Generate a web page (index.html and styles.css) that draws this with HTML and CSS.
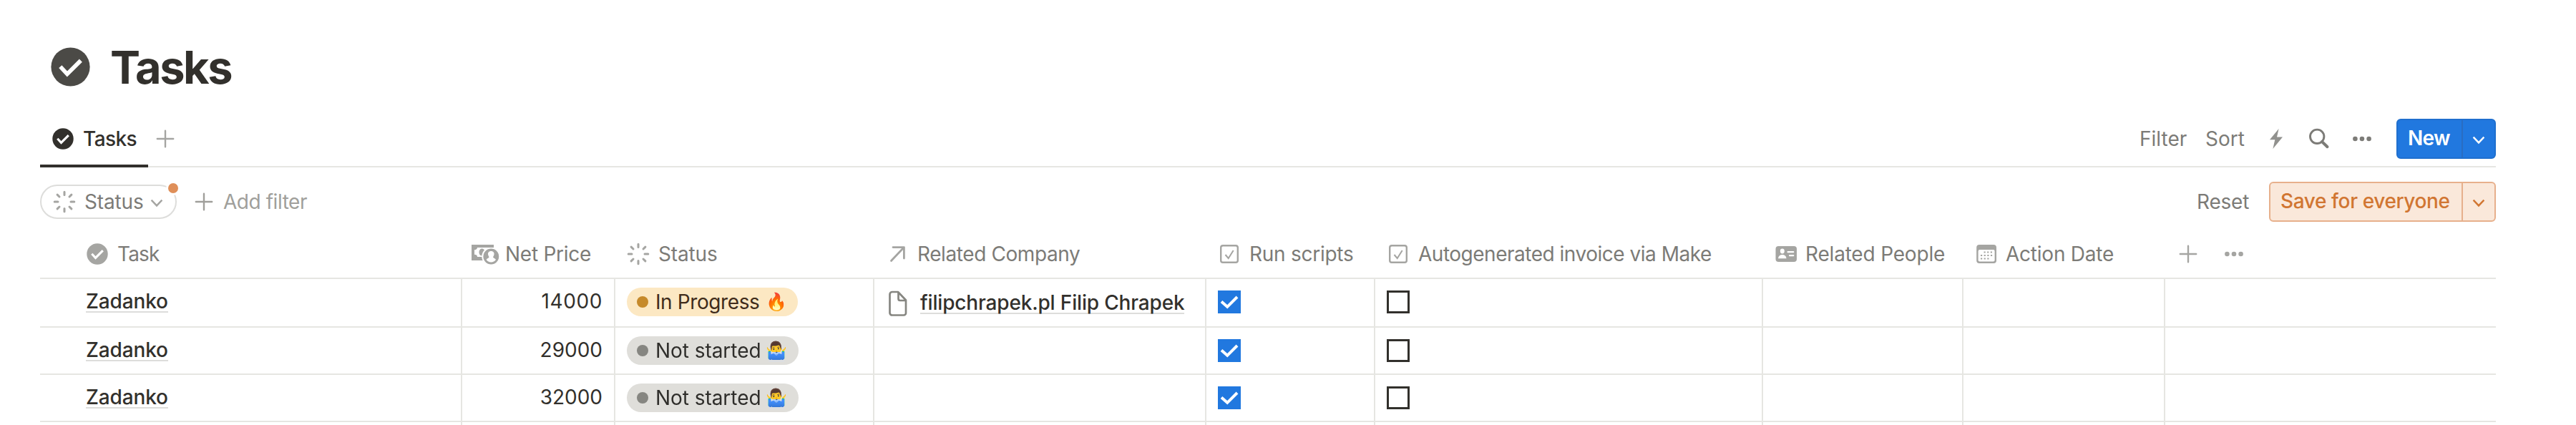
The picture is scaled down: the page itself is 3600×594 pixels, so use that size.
FILE: index.html
```html
<!DOCTYPE html>
<html lang="en">
<head>
<meta charset="utf-8">
<title>Tasks</title>
<link rel="stylesheet" href="styles.css">
</head>
<body>
<svg class="defs" width="0" height="0" aria-hidden="true">
  <symbol id="check-circle" viewBox="0 0 32 32"><circle cx="16" cy="16" r="14.7" fill="currentColor"/><path d="M8.3 15.8l5.2 5.6 10.300-10.200" fill="none" stroke="#fff" stroke-width="3.1"/></symbol>
  <symbol id="spinner" viewBox="0 0 32 32"><g stroke="currentColor" stroke-width="3" stroke-linecap="round"><path d="M16 2.2v4.2M16 25.6v4.2M2.2 16h4.8M25 16h4.8M6.1 6.1l2.9 2.9M23 23l2.9 2.9M6.1 25.9L9 23M23 9l2.9-2.9"/></g></symbol>
  <symbol id="plus" viewBox="0 0 32 32"><path d="M16 4.8v22.4M4.8 16h22.4" stroke="currentColor" stroke-width="2.4" stroke-linecap="round"/></symbol>
  <symbol id="chevron" viewBox="0 0 18 12"><path d="M1.6 1.6L9 9.4l7.4-7.8" fill="none" stroke="currentColor" stroke-width="2.4"/></symbol>
  <symbol id="dots" viewBox="0 0 32 32"><g fill="currentColor"><circle cx="6.4" cy="16" r="3.3"/><circle cx="16" cy="16" r="3.3"/><circle cx="25.6" cy="16" r="3.3"/></g></symbol>
  <symbol id="checkbox" viewBox="0 0 32 32"><rect x="4.2" y="4.2" width="23.6" height="23.6" rx="2.8" fill="none" stroke="currentColor" stroke-width="2.4"/><path d="M10.5 17l4.2 5 7-11" fill="none" stroke="currentColor" stroke-width="2"/></symbol>
  <symbol id="tick" viewBox="0 0 32 32"><path d="M5 15.6l8.2 7.2L27 9" fill="none" stroke="#fff" stroke-width="4"/></symbol>
</svg>
<main class="page">
  <header class="title">
    <svg class="title-icon"><use href="#check-circle"/></svg>
    <h1>Tasks</h1>
  </header>

  <nav class="tabs">
    <div class="tab"><svg class="i"><use href="#check-circle"/></svg><span>Tasks</span></div>
    <svg class="i add-tab"><use href="#plus"/></svg>
    <div class="tools">
      <span class="tool-filter">Filter</span>
      <span class="tool-sort">Sort</span>
      <svg class="i bolt" viewBox="0 0 32 32"><path d="M19.6 2L7 17.2h7.3L11.4 30 25 13.4h-8z" fill="currentColor"/></svg>
      <svg class="i" viewBox="0 0 32 32"><circle cx="13.2" cy="12.8" r="9.7" fill="none" stroke="currentColor" stroke-width="2.9"/><path d="M20 20l7.5 7.2" stroke="currentColor" stroke-width="4" stroke-linecap="round"/></svg>
      <svg class="i dots"><use href="#dots"/></svg>
      <div class="split new"><span class="main">New</span><span class="more"><svg class="chev"><use href="#chevron"/></svg></span></div>
    </div>
  </nav>

  <section class="filters">
    <div class="chip"><svg class="i light"><use href="#spinner"/></svg><span>Status</span><svg class="chev light"><use href="#chevron"/></svg><b class="badge"></b></div>
    <div class="add-filter"><svg class="i"><use href="#plus"/></svg><span>Add filter</span></div>
    <div class="tools">
      <span class="reset">Reset</span>
      <div class="split save"><span class="main">Save for everyone</span><span class="more"><svg class="chev"><use href="#chevron"/></svg></span></div>
    </div>
  </section>

  <section class="table">
    <div class="row head">
      <div class="c-task"><svg class="i"><use href="#check-circle"/></svg><span class="h-task">Task</span></div>
      <div class="c-price"><svg class="money" viewBox="0 0 40 32"><path d="M1 3h31v22H1z" fill="currentColor"/><path d="M9 7h19v13H9c0-2-1.500-3.200-4-3.200v-6.600C7.500 10.200 9 9 9 7z" fill="#fff"/><ellipse cx="15.500" cy="13.500" rx="4" ry="5" fill="currentColor"/><path d="M27 7h8v18h-8z" fill="#fff"/><circle cx="28.300" cy="19.500" r="13" fill="#fff"/><path d="M1 3h31v4H1z" fill="currentColor"/><path d="M17.500 9.500a5 5 0 0 0-5.200 6.800l2 2.200c.4-3.500 1.800-6.500 4.700-8.300z" fill="currentColor"/><circle cx="28.300" cy="19.500" r="10.900" fill="currentColor"/><path d="M28.300 12c3.200 0 4.700 2.300 4.200 4.800-.3 1.600-.9 2.300-1.500 3.400.5 1.600 3 1.900 4 3.600-1.600 2.500-4 3.700-6.700 3.700s-5.100-1.200-6.700-3.700c1-1.700 3.500-2 4-3.600-.6-1.100-1.200-1.800-1.500-3.400-.5-2.500 1-4.800 4.200-4.800z" fill="#fff"/></svg><span class="h-price">Net Price</span></div>
      <div class="c-status"><svg class="i"><use href="#spinner"/></svg><span class="h-status">Status</span></div>
      <div class="c-company"><svg class="i" viewBox="0 0 32 32"><path d="M7.500 25.500L24.500 7.500M10 6.600h15.400V22" fill="none" stroke="currentColor" stroke-width="2.8" stroke-linecap="round" stroke-linejoin="round"/></svg><span class="h-company">Related Company</span></div>
      <div class="c-run"><svg class="i"><use href="#checkbox"/></svg><span class="h-run">Run scripts</span></div>
      <div class="c-auto"><svg class="i"><use href="#checkbox"/></svg><span class="h-auto">Autogenerated invoice via Make</span></div>
      <div class="c-people"><svg class="i" viewBox="0 0 32 32"><rect x="1.500" y="5" width="29.500" height="22" rx="4" fill="currentColor"/><g fill="#fff"><ellipse cx="10.800" cy="12" rx="3" ry="3.400"/><path d="M5 22.200c.5-3.600 2.800-5.200 5.800-5.200s5.300 1.600 5.700 5.200z"/><rect x="17.500" y="12" width="9.800" height="2.300" rx="1"/><rect x="20" y="17" width="7.300" height="2.300" rx="1"/></g></svg><span class="h-people">Related People</span></div>
      <div class="c-date"><svg class="i" viewBox="0 0 32 32"><rect x="2.200" y="3" width="27.800" height="26" rx="4" fill="currentColor"/><rect x="4.600" y="10" width="23" height="16.500" rx="2" fill="#fff"/><path d="M12.500 13.500h12.500M8 18h17M8 22.500h12" stroke="currentColor" stroke-width="2.200" stroke-dasharray="2.200 2.450"/></svg><span class="h-date">Action Date</span></div>
      <div class="c-rest"><svg class="i head-plus"><use href="#plus"/></svg><svg class="i"><use href="#dots"/></svg></div>
    </div>
    <div class="row first">
      <div class="c-task"><a class="link">Zadanko</a></div>
      <div class="c-price num"><span class="wide">14000</span></div>
      <div class="c-status"><span class="pill progress"><i></i><span>In Progress</span><em>🔥</em></span></div>
      <div class="c-company"><svg class="doc" viewBox="0 0 32 36"><path d="M9 2h8l11 11.500V31.500a3 3 0 0 1-3 3H9a3.500 3.500 0 0 1-3.500-3V5.500A3.500 3.500 0 0 1 9 2zM17.500 2v9.500a2.500 2.500 0 0 0 2.500 2.500h8" fill="none" stroke="currentColor" stroke-width="2.700" stroke-linejoin="round"/></svg><a class="link company">filipchrapek.pl Filip Chrapek</a></div>
      <div class="c-run"><svg class="box on"><use href="#tick"/></svg></div>
      <div class="c-auto"><span class="box off"></span></div>
      <div class="c-people"></div><div class="c-date"></div><div class="c-rest"></div>
    </div>
    <div class="row">
      <div class="c-task"><a class="link">Zadanko</a></div>
      <div class="c-price num">29000</div>
      <div class="c-status"><span class="pill idle"><i></i><span>Not started</span><em>🤷‍♂️</em></span></div>
      <div class="c-company"></div>
      <div class="c-run"><svg class="box on"><use href="#tick"/></svg></div>
      <div class="c-auto"><span class="box off"></span></div>
      <div class="c-people"></div><div class="c-date"></div><div class="c-rest"></div>
    </div>
    <div class="row">
      <div class="c-task"><a class="link">Zadanko</a></div>
      <div class="c-price num">32000</div>
      <div class="c-status"><span class="pill idle"><i></i><span>Not started</span><em>🤷‍♂️</em></span></div>
      <div class="c-company"></div>
      <div class="c-run"><svg class="box on"><use href="#tick"/></svg></div>
      <div class="c-auto"><span class="box off"></span></div>
      <div class="c-people"></div><div class="c-date"></div><div class="c-rest"></div>
    </div>
    <div class="row last">
      <div class="c-task"></div><div class="c-price"></div><div class="c-status"></div><div class="c-company"></div><div class="c-run"></div><div class="c-auto"></div><div class="c-people"></div><div class="c-date"></div><div class="c-rest"></div>
    </div>
  </section>
</main>
</body>
</html>
```

FILE: styles.css
```css
* { box-sizing: border-box; }
body {
  margin: 0;
  background: #fff;
  color: #32302c;
  font: 400 28px/40px Inter, sans-serif;
  overflow: hidden;
}
.defs { display: block; height: 0; }
.page { width: 3488px; height: 594px; padding-left: 56px; overflow: hidden; }
svg { display: block; flex: none; }
span, a { white-space: nowrap; }
.i { width: 32px; height: 32px; }
.chev { width: 18px; height: 12px; }
.light { color: #a5a5a2; }

.title { display: flex; align-items: center; height: 156px; padding: 32px 0 2px 13px; }
.title-icon { width: 59px; height: 59px; color: #4b4a46; }
.title h1 { margin: 2px 0 0 26px; font-size: 63px; line-height: 72px; font-weight: 700; letter-spacing: -2.4px; color: #32302c; }

.tabs { display: flex; height: 78px; border-bottom: 2px solid #e6e6e2; align-items: flex-start; }
.tab { display: flex; align-items: center; gap: 12px; width: 151px; height: 78px; padding: 0 0 2px 16px; border-bottom: 4px solid #32302c; font-weight: 500; letter-spacing: -.59px; }
.tab svg { margin-top: 4px; }
.tab span { margin-top: 4px; }
.add-tab { margin: 22px 0 0 8px; color: #a5a5a2; }
.tools { display: flex; align-items: center; margin-left: auto; color: #7c7b77; }
.tabs .tools { height: 76px; }
.tool-filter { width: 92px; }
.tool-sort { width: 83px; }
.bolt { color: #91918e; margin-right: 28px; }
.dots { margin: 0 32px 0 28px; }

.split { display: flex; height: 56px; border-radius: 6px; font-weight: 500; }
.split .main { line-height: 50px; padding-left: 14px; border-right: 2px solid; }
.split .more { display: flex; align-items: center; padding: 3px 0 0 13px; }
.new { width: 139px; background: #2178df; border: 2px solid #1f6fce; color: #fff; }
.new .main { width: 91px; border-color: #2a6dc2; font-weight: 600; letter-spacing: -.7px; }
.save { width: 317px; background: #fae8da; border: 2px solid #e7b08c; color: #d17632; }
.save .main { width: 269px; border-color: #e7b08c; letter-spacing: -.38px; }

.filters { display: flex; align-items: center; height: 96px; }
.chip { position: relative; display: flex; align-items: center; width: 191px; height: 48px; padding-left: 16px; border: 2px solid #dddddb; border-radius: 24px; color: #7c7b77; letter-spacing: -.14px; }
.chip span { margin-left: 12px; width: 92px; }
.chip .chev { margin-top: 3px; }
.badge { position: absolute; top: -7px; right: -7px; width: 20px; height: 20px; border: 3px solid #fff; border-radius: 50%; background: #df8f59; }
.add-filter { display: flex; align-items: center; gap: 11px; margin-left: 22px; color: #a09f9b; letter-spacing: -.45px; }
.reset { width: 101px; letter-spacing: -.2px; }

.row { display: grid; grid-template-columns: 590px 214px 362px 464px 236px 542px 280px 282px 1fr; height: 66px; border-bottom: 2px solid #e6e6e2; }
.row > div { display: flex; align-items: flex-start; padding-left: 16px; border-right: 2px solid #e6e6e2; }
.row > .c-task { padding-left: 64px; }
.row > .c-rest { border-right: 0; }
.row.first { height: 68px; }
.row.last { height: 4px; border: 0; }
.row.head { height: 60px; color: #7c7b77; }
.row.head > div { border-right: 0; align-items: center; padding-bottom: 8px; }
.head svg { color: #a5a5a2; }
.money { width: 40px; height: 32px; }
.row.head > .c-price { padding-left: 12px; }
.h-task { margin-left: 12px; letter-spacing: -.84px; }
.h-price { margin-left: 8px; letter-spacing: -.26px; }
.h-status { margin-left: 12px; letter-spacing: -.14px; }
.h-company { margin-left: 12px; letter-spacing: -.41px; }
.h-run { margin-left: 12px; letter-spacing: -.26px; }
.h-auto { margin-left: 12px; letter-spacing: -.49px; }
.h-people { margin-left: 11px; letter-spacing: -.19px; }
.h-date { margin-left: 11px; letter-spacing: -.23px; }
.head-plus { margin-right: 32px; }

.link { margin-top: 17px; line-height: 28px; border-bottom: 2px solid #dddddb; font-weight: 500; letter-spacing: -.15px; }
.link.company { margin: 19px 0 0 16px; letter-spacing: -.17px; }
.doc { width: 32px; height: 36px; margin-top: 16px; color: #868681; }
.row > .num { justify-content: flex-end; padding: 11px 16px 0 0; }
.wide { letter-spacing: .6px; }
.pill { display: flex; align-items: center; width: 240px; height: 40px; margin-top: 12px; padding-left: 14px; border-radius: 20px; isolation: isolate; }
.pill i { width: 16px; height: 16px; border-radius: 50%; }
.pill > span { width: 154px; margin-left: 10px; }
.pill em { position: relative; font: normal 24px/40px "Noto Color Emoji", sans-serif; }
.progress { width: 239px; background: #fce8c3; color: #402c1b; letter-spacing: -.4px; }
.progress i { background: #c68a2b; }
.idle { background: #dfdeda; color: #2f2e2b; letter-spacing: -.05px; }
.idle i { background: #868681; }
/* tints the shirt blue; the hue blend leaves the grey pill unchanged */
.idle em::after { content: ""; position: absolute; left: 4px; right: 4px; top: 22px; height: 14px; background: #2062c0; mix-blend-mode: hue; }
.box { display: block; width: 32px; height: 32px; margin-top: 16px; }
.on { background: #2178df; }
.off { border: 3px solid #32302c; }
```
